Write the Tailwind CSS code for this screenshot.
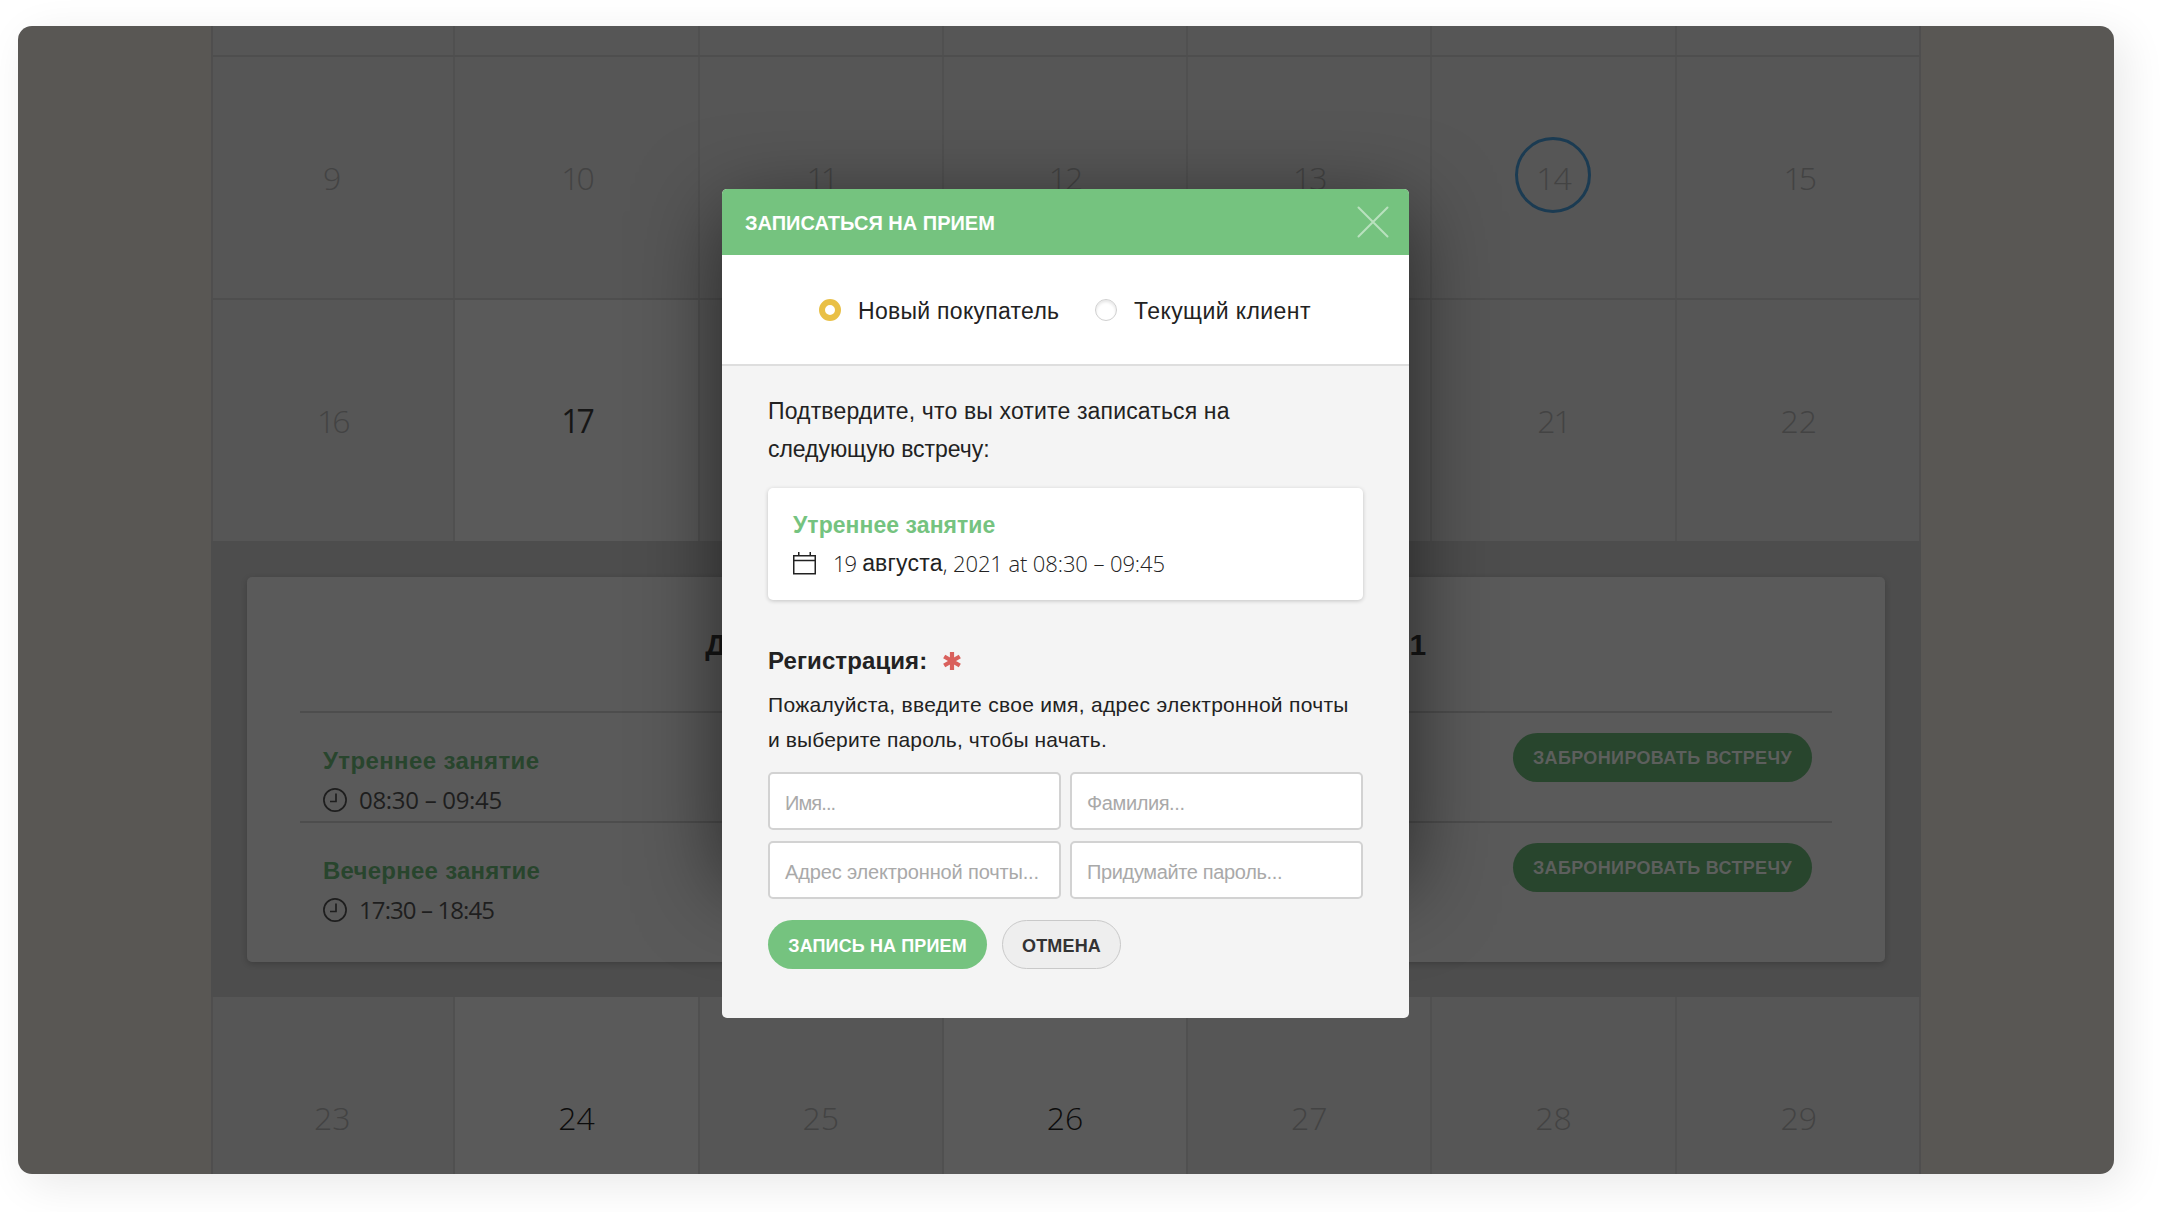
<!DOCTYPE html>
<html lang="ru">
<head>
<meta charset="utf-8">
<title>Записаться на прием</title>
<script src="https://cdn.jsdelivr.net/npm/@tailwindcss/browser@4"></script>
</head>
<body class="h-[1212px] w-[2160px] overflow-hidden bg-white pt-[26px] pl-[18px] font-['Liberation_Sans',Arial,sans-serif] text-[#222]">
<div class="relative h-[1148px] w-[2096px] rounded-[14px] shadow-[10px_10px_44px_rgba(0,0,0,0.09)]">
  <div class="flex h-full w-full justify-center overflow-hidden rounded-[14px] bg-[#595754]">
    <!-- Calendar -->
    <div class="h-full w-[1710px] border-x-2 border-[#4f4e4e] bg-[#565656] font-['Open_Sans',sans-serif] text-[32px] font-light text-[#434343]">
      <div class="-mx-[2px] grid h-[31px] grid-cols-7 divide-x-2 divide-[#505050] border-b-2 border-[#4e4e4e]">
        <div></div><div></div><div></div><div></div><div></div><div></div><div></div>
      </div>
      <div class="-mx-[2px] grid h-[243px] grid-cols-7 divide-x-2 divide-[#505050] border-b-2 border-[#4e4e4e]">
        <div class="flex items-center justify-center">9</div>
        <div class="flex items-center justify-center tracking-[-3px]">10</div>
        <div class="flex items-center justify-center tracking-[-4px]">11</div>
        <div class="flex items-center justify-center tracking-[-2px]">12</div>
        <div class="flex items-center justify-center tracking-[-2px]">13</div>
        <div class="relative flex items-center justify-center tracking-[-1px]">14
          <span class="absolute top-[80px] left-[83px] size-[76px] rounded-full border-3 border-[#1b3b52]"></span>
        </div>
        <div class="flex items-center justify-center tracking-[-3px]">15</div>
      </div>
      <div class="-mx-[2px] grid h-[241px] grid-cols-7 divide-x-2 divide-[#505050]">
        <div class="flex items-center justify-center tracking-[-3px]">16</div>
        <div class="flex items-center justify-center bg-[#5a5a5a] font-normal tracking-[-3px] text-[#161616]">17</div>
        <div class="flex items-center justify-center">&nbsp;</div>
        <div class="flex items-center justify-center bg-[#5a5a5a]">&nbsp;</div>
        <div class="flex items-center justify-center">&nbsp;</div>
        <div class="flex items-center justify-center tracking-[-2px]">21</div>
        <div class="flex items-center justify-center">22</div>
      </div>
      <!-- Expanded day -->
      <div class="-mx-[2px] h-[456px] bg-[#4d4d4d] px-9 pt-9 font-['Liberation_Sans',Arial,sans-serif] font-normal text-[#1e1e1e]">
        <div class="h-[385px] rounded-[5px] bg-[#5a5a5a] px-[53px] shadow-[0_2px_6px_rgba(0,0,0,0.2)]">
          <h2 class="flex h-[136px] items-center justify-center border-b-2 border-[#4d4d4d] text-[30px] font-bold whitespace-nowrap text-[#161616]"><span class="tracking-[0.42px]">Доступные встречи на четверг, 19 августа 2021</span></h2>
          <div class="flex h-[110px] items-start justify-between border-b-2 border-[#4d4d4d] pr-[20px] pl-[23px]">
            <div class="pt-[29px]">
              <div class="text-[24px] leading-[38px] font-bold tracking-[0.38px] text-[#28452d]">Утреннее занятие</div>
              <div class="flex h-[40px] items-center gap-[12px]">
                <svg class="size-6" viewBox="0 0 24 24" fill="none" stroke="#1e1e1e" stroke-width="1.7"><circle cx="12" cy="12" r="11.1"/><path d="M13 5.500v8H7"/></svg>
                <span class="font-['Open_Sans',sans-serif] text-[24px] font-medium tracking-[-0.3px]">08:30 – 09:45</span>
              </div>
            </div>
            <div class="mt-[20px] flex h-[49px] w-[299px] items-center justify-center rounded-full bg-[#28452d] pt-[2px] text-[18px] font-bold tracking-[0.36px] text-[#5d5f5d]">ЗАБРОНИРОВАТЬ ВСТРЕЧУ</div>
          </div>
          <div class="flex h-[110px] items-start justify-between pr-[20px] pl-[23px]">
            <div class="pt-[29px]">
              <div class="text-[24px] leading-[38px] font-bold tracking-[0.25px] text-[#28452d]">Вечернее занятие</div>
              <div class="flex h-[40px] items-center gap-[12px]">
                <svg class="size-6" viewBox="0 0 24 24" fill="none" stroke="#1e1e1e" stroke-width="1.7"><circle cx="12" cy="12" r="11.1"/><path d="M13 5.500v8H7"/></svg>
                <span class="font-['Open_Sans',sans-serif] text-[24px] font-medium tracking-[-0.9px]">17:30 – 18:45</span>
              </div>
            </div>
            <div class="mt-[20px] flex h-[49px] w-[299px] items-center justify-center rounded-full bg-[#28452d] pt-[2px] text-[18px] font-bold tracking-[0.36px] text-[#5d5f5d]">ЗАБРОНИРОВАТЬ ВСТРЕЧУ</div>
          </div>
        </div>
      </div>
      <div class="-mx-[2px] grid h-[242px] grid-cols-7 divide-x-2 divide-[#505050]">
        <div class="flex items-center justify-center">23</div>
        <div class="flex items-center justify-center bg-[#5a5a5a] text-[#0c0c0c]">24</div>
        <div class="flex items-center justify-center">25</div>
        <div class="flex items-center justify-center bg-[#5a5a5a] text-[#0c0c0c]">26</div>
        <div class="flex items-center justify-center">27</div>
        <div class="flex items-center justify-center">28</div>
        <div class="flex items-center justify-center">29</div>
      </div>
    </div>
  </div>

  <!-- Modal -->
  <div class="absolute top-[185px] left-[705px] h-[675px] w-[686px] rounded-[5px] shadow-[0_0_84px_rgba(0,0,0,0.56)]"></div>
  <div class="absolute top-[163px] left-[704px] h-[829px] w-[687px] overflow-hidden rounded-[5px] bg-[#f4f4f4]">
    <div class="flex h-[66px] items-center justify-between bg-[#75c37f] pr-[20px] pl-[23px]">
      <span class="pt-[2px] text-[20px] font-bold text-white">ЗАПИСАТЬСЯ НА ПРИЕМ</span>
      <svg class="size-8" viewBox="0 0 32 32" fill="none" stroke="#b9e1be" stroke-width="2" stroke-linecap="round"><path d="M1.500 1.500l29 29M30.500 1.500l-29 29"/></svg>
    </div>
    <div class="flex h-[111px] items-center border-b-2 border-[#dedede] bg-white pl-[97px] text-[23px]">
      <span class="size-[22px] rounded-full border-[6px] border-[#e9c046] bg-white"></span>
      <span class="w-[254px] pt-[3px] pl-[17px] tracking-[0.28px] whitespace-nowrap">Новый покупатель</span>
      <span class="size-[22px] rounded-full border border-[#d0d0d0] bg-white shadow-[inset_0_2px_3px_rgba(0,0,0,0.1)]"></span>
      <span class="pt-[3px] pl-[17px] tracking-[0.42px] whitespace-nowrap">Текущий клиент</span>
    </div>
    <div class="px-[46px] pt-[26px]">
      <p class="text-[23px] leading-[38px] tracking-[0.15px]">Подтвердите, что вы хотите записаться на<br><span class="tracking-[-0.05px]">следующую встречу:</span></p>
      <div class="mt-[20px] h-[112px] rounded-[5px] bg-white pt-[18px] pl-[25px] shadow-[0_1px_4px_rgba(0,0,0,0.2)]">
        <div class="text-[23px] leading-[38px] font-bold tracking-[0.05px] text-[#75c37f]">Утреннее занятие</div>
        <div class="flex h-[38px] items-center text-[22px] whitespace-nowrap">
          <svg class="h-6 w-[23px]" viewBox="0 0 23 24" fill="none" stroke="#222" stroke-width="1.500"><path d="M.750 4.750h21.500v18H.750zM.750 9.500h21.500M5.750 1v3.750M17.250 1v3.750"/></svg>
          <span class="ml-[17px] font-['Open_Sans',sans-serif] font-light tracking-[-1px]">19</span>
          <span class="ml-[6px] text-[23px] tracking-[0.2px]">августа</span>
          <span class="font-['Open_Sans',sans-serif] font-light tracking-[-0.1px]">, 2021 at 08:30 – 09:45</span>
        </div>
      </div>
      <div class="mt-[43px] flex h-9 items-center text-[24px] font-bold"><span class="tracking-[0.1px]">Регистрация:</span>
        <svg class="ml-[16px] size-[18px]" viewBox="0 0 18 18" stroke="#d9605c" stroke-width="4.200"><path d="M9 0v18M1.200 4.500l15.600 9M16.800 4.500l-15.600 9"/></svg>
      </div>
      <p class="mt-[8px] text-[21px] leading-[35px] tracking-[0.3px] whitespace-nowrap">Пожалуйста, введите свое имя, адрес электронной почты<br><span class="tracking-[0.13px]">и выберите пароль, чтобы начать.</span></p>
      <div class="mt-[15px] grid grid-cols-2 gap-x-[9px] gap-y-[11px] text-[20px] whitespace-nowrap text-[#a9a9a9]">
        <div class="flex h-[58px] items-center rounded-[5px] border-2 border-[#d2d2d2] bg-white pt-[3px] pl-[15px] tracking-[-0.9px]">Имя...</div>
        <div class="flex h-[58px] items-center rounded-[5px] border-2 border-[#d2d2d2] bg-white pt-[3px] pl-[15px] tracking-[-0.4px]">Фамилия...</div>
        <div class="flex h-[58px] items-center rounded-[5px] border-2 border-[#d2d2d2] bg-white pt-[3px] pl-[15px] tracking-[-0.15px]">Адрес электронной почты...</div>
        <div class="flex h-[58px] items-center rounded-[5px] border-2 border-[#d2d2d2] bg-white pt-[3px] pl-[15px] tracking-[-0.36px]">Придумайте пароль...</div>
      </div>
      <div class="mt-[21px] flex gap-[15px] text-[18px] font-bold">
        <div class="flex h-[49px] w-[219px] items-center justify-center rounded-full bg-[#75c37f] pt-[3px] tracking-[0.12px] text-white">ЗАПИСЬ НА ПРИЕМ</div>
        <div class="flex h-[49px] w-[119px] items-center justify-center rounded-full border-[1.5px] border-[#c9c9c9] bg-[#eee] pt-[3px] tracking-[0.17px] text-[#333]">ОТМЕНА</div>
      </div>
    </div>
  </div>
</div>
</body>
</html>
